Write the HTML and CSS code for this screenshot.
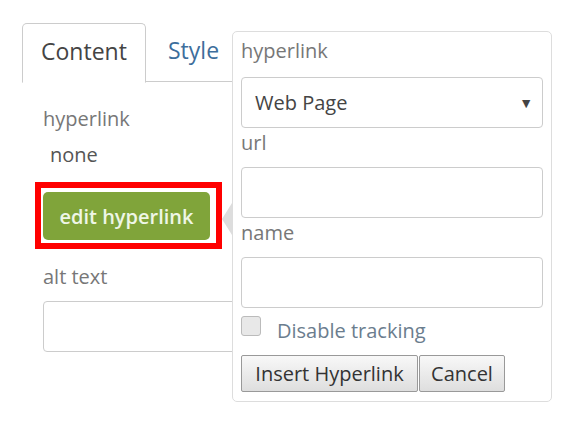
FILE: index.html
```html
<!DOCTYPE html>
<html>
<head>
	<meta charset="utf-8">
	<title>Image properties</title>
	<link rel="stylesheet" href="styles.css">
</head>

<body>
	<div class="editor">
		<div class="tabs">
			<div class="tab active">Content</div>
			<div class="tab">Style</div>
		</div>

		<div class="panel">
			<div class="label">hyperlink</div>
			<div class="value">none</div>
			<div class="highlight">
				<button class="btn-green">edit hyperlink</button>
			</div>
			<div class="label alt">alt text</div>
			<input class="field wide" type="text">
		</div>

		<div class="popup">
			<span class="arrow"></span>
			<div class="label">hyperlink</div>
			<div class="select">Web Page <span class="caret">&#9660;</span></div>
			<div class="label">url</div>
			<input class="field" type="text">
			<div class="label">name</div>
			<input class="field" type="text">
			<label class="check">
				<span class="box"></span>
				Disable tracking
			</label>
			<div class="actions">
				<button class="btn insert">Insert Hyperlink</button><button class="btn cancel">Cancel</button>
			</div>
		</div>
	</div>
</body>
</html>
```

FILE: styles.css
```css
body{
	margin: 0;
	background-color: white;
	font-family: "Open Sans", sans-serif;
	color: #444;
}
.editor{
	position: relative;
	padding: 23px 0 0 22px;
	height: 402px;
	box-sizing: border-box;
}
.tabs{
	display: flex;
	width: 210px;
	border-bottom: 1px solid #ccc;
	height: 58px;
}
.tab{
	font-size: 23px;
	line-height: 54px;
	color: #3d6e9c;
	margin-left: 22px;
}
.tab.active{
	margin-left: 0;
	width: 104px;
	padding-left: 18px;
	color: #444;
	border: 1px solid #ccc;
	border-bottom: 1px solid white;
	border-radius: 5px 5px 0 0;
	background-color: white;
	height: 58px;
}
.panel{
	padding-left: 21px;
}
.label{
	font-size: 20px;
	line-height: 30px;
	color: #777;
}
.panel .label{
	margin-top: 22px;
}
.value{
	font-size: 20px;
	line-height: 30px;
	margin: 6px 0 0 7px;
	color: #555;
}
.highlight{
	display: inline-block;
	margin: 12px 0 0 -8px;
	border: 6px solid red;
	padding: 4px 6px 3px 2px;
}
.btn-green{
	display: block;
	width: 167px;
	height: 48px;
	background-color: #80a43a;
	border: 0;
	border-radius: 5px;
	color: #eef6e6;
	font-family: "Open Sans", sans-serif;
	font-size: 20px;
	font-weight: 600;
}
.panel .label.alt{
	margin-top: 13px;
}
.field{
	display: block;
	box-sizing: border-box;
	width: 302px;
	height: 51px;
	margin-top: 9px;
	border: 1px solid #ccc;
	border-radius: 4px;
}
.wide{
	width: 260px;
}
.popup{
	position: absolute;
	left: 232px;
	top: 31px;
	width: 320px;
	height: 371px;
	box-sizing: border-box;
	padding: 4px 8px 8px 8px;
	background-color: white;
	border: 1px solid #ddd;
	border-radius: 5px;
}
.arrow{
	position: absolute;
	left: -11px;
	top: 171px;
	border-top: 16px solid transparent;
	border-bottom: 16px solid transparent;
	border-right: 10px solid #ddd;
}
.select{
	display: flex;
	align-items: center;
	justify-content: space-between;
	box-sizing: border-box;
	height: 51px;
	margin-top: 11px;
	padding: 0 9px 0 13px;
	border: 1px solid #ccc;
	border-radius: 4px;
	font-size: 20px;
	color: #444;
}
.caret{
	font-size: 14px;
	color: #444;
}
.check{
	display: flex;
	align-items: center;
	height: 36px;
	margin-top: 4px;
	font-size: 20px;
	color: #6b7d8e;
}
.box{
	width: 18px;
	height: 18px;
	margin: -8px 16px 0 0;
	border: 1px solid #bbb;
	border-radius: 3px;
	background-color: #e8e8e8;
}
.actions{
	display: flex;
	margin-top: 7px;
}
.btn{
	height: 37px;
	padding: 0;
	margin-right: 1px;
	font-family: "Open Sans", sans-serif;
	font-size: 20px;
	color: #333;
	border: 1px solid #999;
	border-radius: 2px;
	background: linear-gradient(#f8f8f8, #dedede);
}
.insert{
	width: 177px;
}
.cancel{
	width: 86px;
}
```
